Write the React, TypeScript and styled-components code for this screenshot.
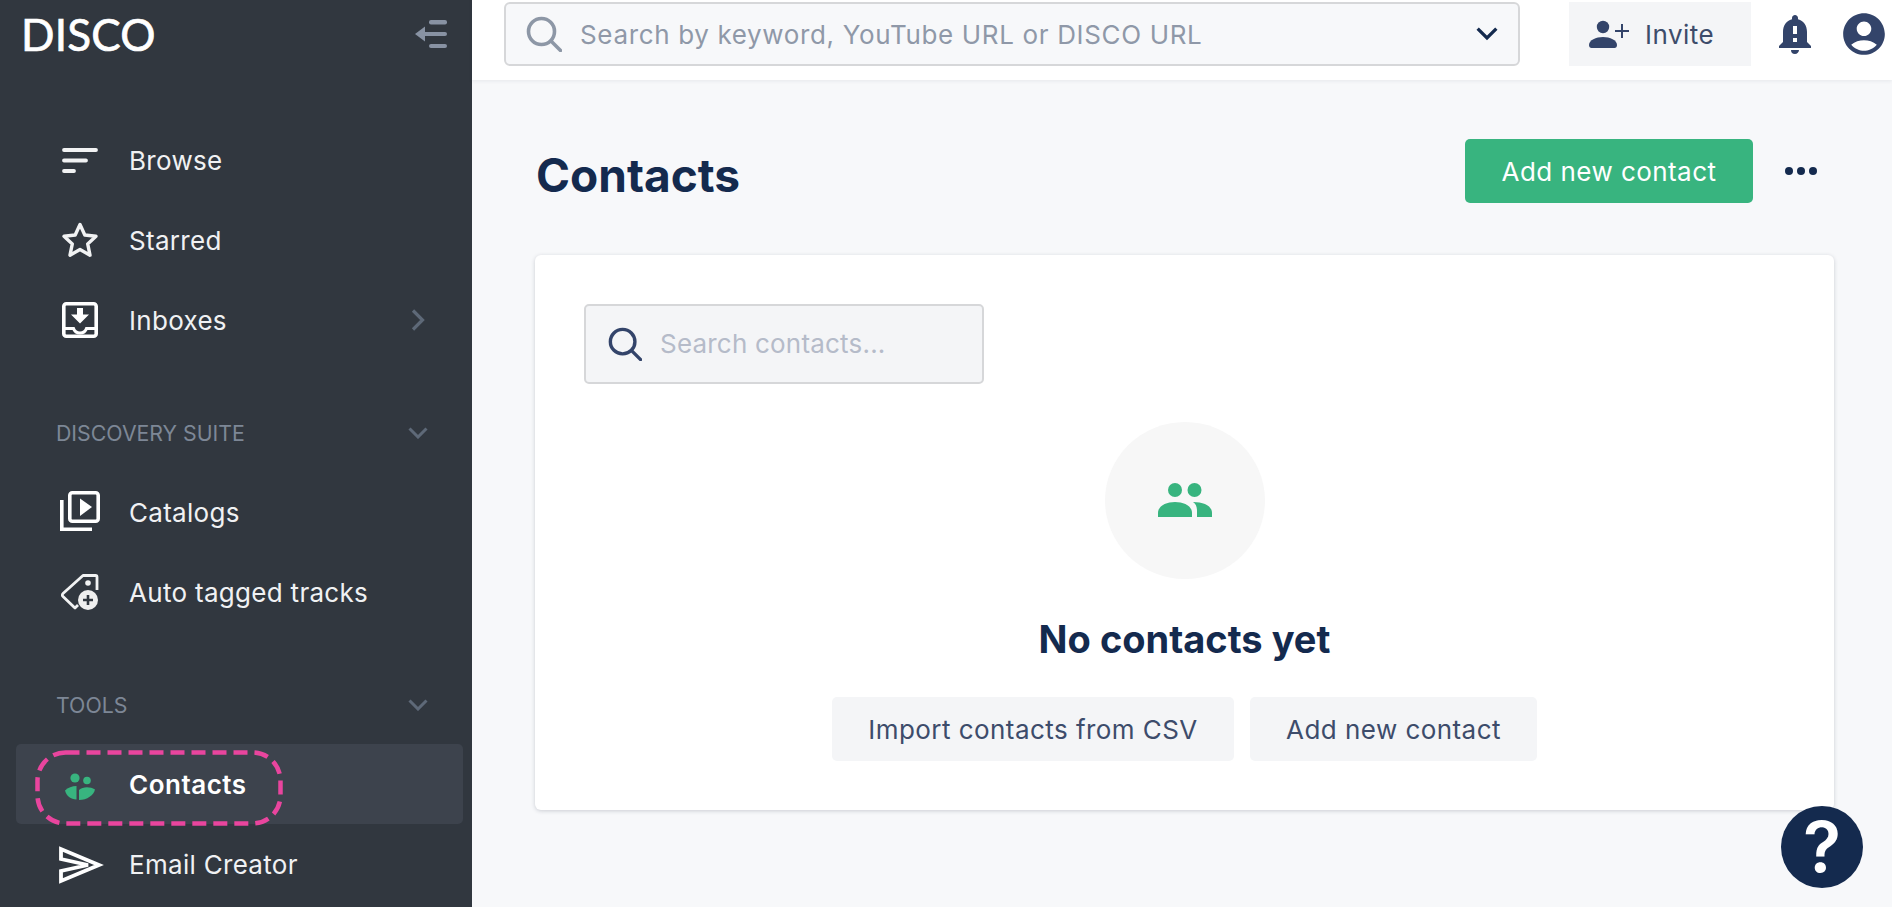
import React from 'react';
import styled, { createGlobalStyle } from 'styled-components';
import { MdNotificationImportant, MdAccountCircle } from 'react-icons/md';

const GlobalStyle = createGlobalStyle`
  html, body {
    margin: 0;
    padding: 0;
    height: 100%;
    overflow: hidden;
    background: #f7f8fa;
    font-family: Inter, 'Noto Sans', sans-serif;
  }
  * { box-sizing: border-box; }
`;

const Page = styled.div`
  display: flex;
  width: 1892px;
  height: 907px;
  overflow: hidden;
`;

const Sidebar = styled.aside`
  flex: 0 0 472px;
  height: 907px;
  overflow: hidden;
  background: #31373f;
  color: #f0f1f3;
`;

const Brand = styled.div`
  display: flex;
  align-items: center;
  justify-content: space-between;
  height: 68px;
  padding: 0 24px 0 21px;
  margin-bottom: 52px;
`;

const Logo = styled.div`
  font-family: Lato, sans-serif;
  font-size: 44px;
  font-weight: 400;
  letter-spacing: 0.2px;
  -webkit-text-stroke: 0.7px #fff;
  color: #fff;
`;

const NavGroup = styled.nav`
  display: flex;
  flex-direction: column;
  margin-bottom: ${(p: { $gap: number }) => p.$gap}px;
`;

const NavRow = styled.div<{ $active?: boolean }>`
  position: relative;
  display: flex;
  align-items: center;
  gap: 27px;
  height: 80px;
  margin: 0 9px 0 16px;
  padding: 0 38px 0 42px;
  border-radius: 5px;
  background: ${(p) => (p.$active ? '#3d434d' : 'transparent')};
  font-size: 26px;
  letter-spacing: ${(p) => (p.$active ? '0.5px' : '0.3px')};
  font-weight: ${(p) => (p.$active ? 600 : 400)};
  color: ${(p) => (p.$active ? '#fff' : '#f0f1f3')};
`;

const NavLabel = styled.span`
  flex: 1;
`;

const Highlight = styled.svg`
  position: absolute;
  left: 19px;
  top: 6px;
`;

const SectionTitle = styled.div`
  display: flex;
  align-items: center;
  justify-content: space-between;
  height: 44px;
  margin-bottom: 17px;
  padding: 0 44px 0 56px;
  font-size: 21.3px;
  color: #7d8796;
`;

const Main = styled.main`
  flex: 1;
  display: flex;
  flex-direction: column;
  min-width: 0;
`;

const TopBar = styled.header`
  display: flex;
  align-items: flex-start;
  height: 80px;
  padding: 2px 3px 0 32px;
  background: #fff;
  box-shadow: 0 1px 4px rgba(30, 40, 60, 0.08);
`;

const GlobalSearch = styled.div`
  flex: none;
  display: flex;
  align-items: center;
  width: 1016px;
  height: 64px;
  padding: 0 20px 0 20px;
  gap: 18px;
  background: #f7f8fa;
  border: 2px solid #d6d7d9;
  border-radius: 6px;
  font-size: 26px;
  letter-spacing: 0.65px;
  color: #8f98a8;
`;

const GrowText = styled.span`
  flex: 1;
`;

const InviteButton = styled.div`
  flex: none;
  display: flex;
  align-items: center;
  gap: 11px;
  width: 182px;
  height: 64px;
  margin-left: 49px;
  padding-left: 20px;
  background: #f4f5f7;
  font-size: 26px;
  letter-spacing: 0.5px;
  color: #3d4c6b;
`;

const HeaderIcons = styled.div`
  display: flex;
  align-items: center;
  height: 64px;
  margin-left: 20px;
  color: #33446a;
  gap: 20px;
`;

const Content = styled.div`
  position: relative;
  flex: 1;
  padding: 59px 58px 0 63px;
`;

const TitleRow = styled.div`
  display: flex;
  align-items: center;
  height: 64px;
  margin-bottom: 52px;
`;

const PageTitle = styled.h1`
  flex: 1;
  margin: 7px 0 0 1px;
  font-size: 46px;
  font-weight: 700;
  color: #142a4e;
`;

const PrimaryButton = styled.div`
  display: flex;
  align-items: center;
  justify-content: center;
  width: 288px;
  height: 64px;
  border-radius: 5px;
  background: #38b47f;
  color: #fff;
  font-size: 26px;
  letter-spacing: 0.45px;
`;

const MoreButton = styled.div`
  display: flex;
  align-items: center;
  gap: 4px;
  margin: 0 17px 0 32px;
`;

const Dot = styled.span`
  width: 8px;
  height: 8px;
  border-radius: 50%;
  background: #142a4e;
`;

const Card = styled.section`
  display: flex;
  flex-direction: column;
  align-items: center;
  width: 1299px;
  height: 555px;
  padding: 49px;
  background: #fff;
  border-radius: 6px;
  box-shadow: 0 1px 4px rgba(30, 40, 60, 0.2);
`;

const ContactSearch = styled.div`
  align-self: flex-start;
  display: flex;
  align-items: center;
  gap: 18px;
  width: 400px;
  height: 81px;
  padding: 0 22px;
  background: #f4f5f7;
  border: 2px solid #d6d7d9;
  border-radius: 5px;
  font-size: 26px;
  letter-spacing: 0.2px;
  color: #b5bbc9;
`;

const EmptyCircle = styled.div`
  display: flex;
  align-items: center;
  justify-content: center;
  width: 160px;
  height: 160px;
  margin-top: 38px;
  border-radius: 50%;
  background: #f7f7f7;
`;

const EmptyTitle = styled.h2`
  margin: 38px 0 0;
  font-size: 38px;
  line-height: 44px;
  font-weight: 700;
  color: #142a4e;
`;

const EmptyActions = styled.div`
  display: flex;
  gap: 16px;
  margin-top: 36px;
`;

const SecondaryButton = styled.div`
  display: flex;
  align-items: center;
  justify-content: center;
  height: 64px;
  width: ${(p: { $width: number }) => p.$width}px;
  border-radius: 5px;
  background: #f4f5f7;
  color: #3d4c6b;
  font-size: 26px;
  letter-spacing: 0.45px;
`;

const HelpBubble = styled.div`
  position: absolute;
  right: 29px;
  bottom: 19px;
  display: flex;
  align-items: center;
  justify-content: center;
  width: 82px;
  height: 82px;
  border-radius: 50%;
  background: #142a4e;
  color: #fff;
  font-size: 70px;
  line-height: 1;
  font-weight: 600;
`;

const Icon44 = ({ children }: { children: React.ReactNode }) => (
  <svg width="44" height="44" viewBox="0 0 44 44" fill="none" style={{ flex: 'none' }}>
    {children}
  </svg>
);

const BrowseIcon = () => (
  <Icon44>
    <path d="M6 12H38M6 22.5H28M6 33H16" stroke="#f1f2f3" strokeWidth="3.8" strokeLinecap="round" />
  </Icon44>
);

const StarIcon = () => (
  <Icon44>
    <path
      d="M22 6.5 26.8 17l11.2 1.3-8.3 7.6 2.3 11.3L22 31.5l-10 5.7 2.3-11.3L6 18.3 17.2 17Z"
      stroke="#f1f2f3"
      strokeWidth="3.4"
      strokeLinejoin="round"
    />
  </Icon44>
);

const InboxIcon = () => (
  <Icon44>
    <rect x="5.8" y="5.8" width="32.4" height="32.4" rx="2.5" stroke="#fff" strokeWidth="3.6" />
    <path d="M6 30.5h9.5c1 3 3.6 4.5 6.5 4.5s5.500-1.500 6.500-4.500H38" stroke="#fff" strokeWidth="3" />
    <path d="M19 10h6v6.500h6L22 25.500 13 16.500h6Z" fill="#fff" />
  </Icon44>
);

const CatalogIcon = () => (
  <Icon44>
    <rect x="11.800" y="2.800" width="28.400" height="28.400" rx="2.500" stroke="#fff" strokeWidth="3.600" />
    <path d="M3.800 10V39.200H34" stroke="#fff" strokeWidth="3.600" />
    <path d="M22 8.500 34 17 22 26Z" fill="#fff" />
  </Icon44>
);

const TagIcon = () => (
  <Icon44>
    <path
      d="M20 35 17 38 5 26.500a2 2 0 0 1 0-3L25 5.500h12.500a1.500 1.500 0 0 1 1.500 1.500v13"
      stroke="#f1f2f3"
      strokeWidth="2.800"
      strokeLinejoin="round"
    />
    <circle cx="30" cy="13" r="2.800" fill="#f1f2f3" />
    <circle cx="30" cy="30" r="10" fill="#efefef" />
    <path d="M30 25v10M25 30h10" stroke="#31373f" strokeWidth="2.600" />
  </Icon44>
);

const ContactsLeafIcon = () => (
  <Icon44>
    <circle cx="17" cy="16" r="4.600" fill="#38b47f" />
    <circle cx="29" cy="18.500" r="3.800" fill="#38b47f" />
    <path d="M7 28.500C10 25.500 14 24 18.500 24V37.500C12.500 37 8.500 34 7 28.500Z" fill="#38b47f" />
    <path d="M21 38V28C25 24.500 32 24.500 37 27.500 36 33 29 38 21 38Z" fill="#38b47f" />
  </Icon44>
);

const SendIcon = () => (
  <svg width="46" height="44" viewBox="0 0 46 44" fill="none" style={{ flex: 'none', marginRight: -2 }}>
    <path d="M3 7V17L30 23 3 29V39L41 23Z" stroke="#fff" strokeWidth="3.800" strokeLinejoin="miter" />
  </svg>
);

const CollapseIcon = () => (
  <svg width="32" height="28" viewBox="0 0 32 28" fill="#8892a3" style={{ marginRight: 1 }}>
    <rect x="14" y="0" width="18" height="4.500" rx="2" />
    <rect x="8" y="12" width="24" height="4" rx="2" />
    <rect x="14" y="24" width="18" height="4" rx="2" />
    <path d="M0 14 10 6.500V21.500Z" />
  </svg>
);

const ChevronDown = ({ color = '#5e6978', width = 20 }: { color?: string; width?: number }) => (
  <svg width={width} height={width * 0.6} viewBox="0 0 20 12" fill="none" style={{ flex: 'none' }}>
    <path d="M1.500 1.500 10 10 18.500 1.500" stroke={color} strokeWidth="3" />
  </svg>
);

const ChevronRight = () => (
  <svg width="14" height="22" viewBox="0 0 14 22" fill="none" style={{ flex: 'none' }}>
    <path d="M2 1.500 11.500 11 2 20.500" stroke="#5e6978" strokeWidth="3.200" />
  </svg>
);

const SearchIcon = ({ color, size }: { color: string; size: number }) => (
  <svg width={size} height={size} viewBox="0 0 36 36" fill="none" style={{ flex: 'none' }}>
    <circle cx="15.500" cy="15.500" r="13" stroke={color} strokeWidth="3.600" />
    <path d="M25 25 34.500 34.500" stroke={color} strokeWidth="3.600" strokeLinecap="round" />
  </svg>
);

const InviteIcon = () => (
  <svg width="45" height="30" viewBox="0 0 45 30" fill="#33446a" style={{ flex: 'none' }}>
    <circle cx="14" cy="8" r="6.200" />
    <path d="M0 26c0-5 7-8 14-8s14 3 14 8c0 2-1 3-2.500 3h-23C1 29 0 28 0 26Z" />
    <path d="M33 5V19M26 12H40" stroke="#33446a" strokeWidth="2" />
  </svg>
);

const PeopleIcon = () => (
  <svg width="54" height="34" viewBox="0 0 54 34" fill="#38b47f">
    <circle cx="17" cy="7" r="7" />
    <circle cx="36.500" cy="7" r="7" />
    <path d="M0 34V30C0 23 8 19 17 19S34 23 34 30V34Z" />
    <path d="M35 19C46 19 54 23 54 30V34H39V28C39 24 38 21 35 19Z" />
  </svg>
);

export default function App() {
  return (
    <Page>
      <GlobalStyle />
      <Sidebar>
        <Brand>
          <Logo>DISCO</Logo>
          <CollapseIcon />
        </Brand>
        <NavGroup $gap={51}>
          <NavRow>
            <BrowseIcon />
            <NavLabel>Browse</NavLabel>
          </NavRow>
          <NavRow>
            <StarIcon />
            <NavLabel>Starred</NavLabel>
          </NavRow>
          <NavRow>
            <InboxIcon />
            <NavLabel>Inboxes</NavLabel>
            <ChevronRight />
          </NavRow>
        </NavGroup>
        <SectionTitle>
          DISCOVERY SUITE
          <ChevronDown />
        </SectionTitle>
        <NavGroup $gap={51}>
          <NavRow>
            <CatalogIcon />
            <NavLabel>Catalogs</NavLabel>
          </NavRow>
          <NavRow>
            <TagIcon />
            <NavLabel>Auto tagged tracks</NavLabel>
          </NavRow>
        </NavGroup>
        <SectionTitle>
          TOOLS
          <ChevronDown />
        </SectionTitle>
        <NavGroup $gap={0}>
          <NavRow $active>
            <ContactsLeafIcon />
            <NavLabel>Contacts</NavLabel>
            <Highlight width="248" height="76" viewBox="0 0 248 76" fill="none">
              <rect
                x="2.500"
                y="2.500"
                width="243"
                height="71"
                rx="28"
                stroke="#e9459e"
                strokeWidth="4.500"
                strokeDasharray="14 7"
              />
            </Highlight>
          </NavRow>
          <NavRow>
            <SendIcon />
            <NavLabel>Email Creator</NavLabel>
          </NavRow>
        </NavGroup>
      </Sidebar>
      <Main>
        <TopBar>
          <GlobalSearch>
            <SearchIcon color="#8d97a6" size={36} />
            <GrowText>Search by keyword, YouTube URL or DISCO URL</GrowText>
            <ChevronDown color="#142a4e" width={22} />
          </GlobalSearch>
          <InviteButton>
            <InviteIcon />
            Invite
          </InviteButton>
          <HeaderIcons>
            <MdNotificationImportant size={48} />
            <MdAccountCircle size={50} />
          </HeaderIcons>
        </TopBar>
        <Content>
          <TitleRow>
            <PageTitle>Contacts</PageTitle>
            <PrimaryButton>Add new contact</PrimaryButton>
            <MoreButton>
              <Dot />
              <Dot />
              <Dot />
            </MoreButton>
          </TitleRow>
          <Card>
            <ContactSearch>
              <SearchIcon color="#33446a" size={34} />
              Search contacts...
            </ContactSearch>
            <EmptyCircle>
              <PeopleIcon />
            </EmptyCircle>
            <EmptyTitle>No contacts yet</EmptyTitle>
            <EmptyActions>
              <SecondaryButton $width={402}>Import contacts from CSV</SecondaryButton>
              <SecondaryButton $width={287}>Add new contact</SecondaryButton>
            </EmptyActions>
          </Card>
          <HelpBubble>?</HelpBubble>
        </Content>
      </Main>
    </Page>
  );
}
